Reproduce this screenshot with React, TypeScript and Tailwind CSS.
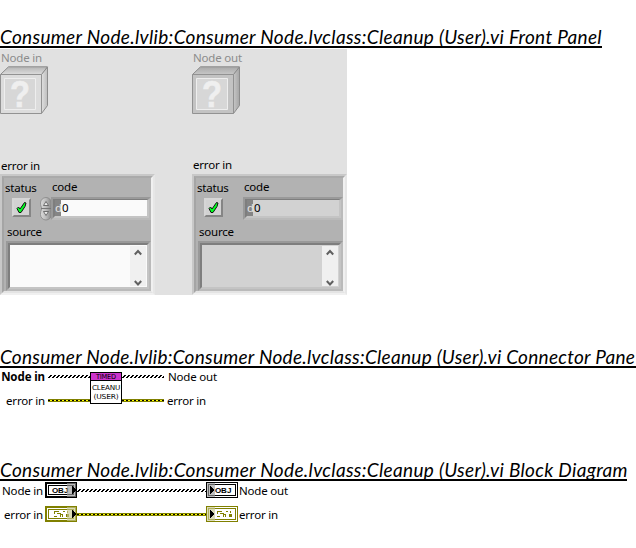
import React from "react";

const ui = "font-['Noto_Sans','Open_Sans',sans-serif] text-[11.5px] tracking-[-0.2px] leading-[16px] whitespace-nowrap";

function Heading({ children, className }: { children: string; className: string }) {
  return (
    <h2 className={`h-[22px] shrink-0 border-b-2 border-black font-['Lato',sans-serif] text-[19px] italic leading-[22px] whitespace-nowrap text-black ${className}`}>
      <span>{children}</span>
    </h2>
  );
}

function Cube({ out = false }: { out?: boolean }) {
  return (
    <svg width="49" height="49" className="block" viewBox="0 0 49 49">
      <defs>
        <linearGradient id={out ? "topOut" : "topIn"} x1="0" y1="0" x2="0" y2="1">
          <stop offset="0" stopColor={out ? "#a9a9a9" : "#b5b5b5"} />
          <stop offset="1" stopColor={out ? "#c8c8c8" : "#dedede"} />
        </linearGradient>
        <linearGradient id={out ? "sideOut" : "sideIn"} x1="0" y1="0" x2="1" y2="0">
          <stop offset="0" stopColor={out ? "#c6c6c6" : "#e0e0e0"} />
          <stop offset="1" stopColor={out ? "#a5a5a5" : "#bdbdbd"} />
        </linearGradient>
      </defs>
      <path d="M.5 8.5 8.500 .8h39l-6 8z" fill={`url(#${out ? "topOut" : "topIn"})`} stroke="#8c8c8c" />
      <path d="M41.500 8.5 47.500 1v38.500L41.500 47.5z" fill={`url(#${out ? "sideOut" : "sideIn"})`} stroke="#8c8c8c" />
      <path d="M.5 8.5h41v39H.5z" fill={out ? "#c3c3c3" : "#dcdcdc"} stroke="#929292" />
      <path d="M4.5 12.5h31v31h-31z" fill="#d7d7d7" stroke="#eee" />
      <text x="20" y="41" textAnchor="middle" fill="#efefef" stroke="#efefef" strokeWidth=".6" fontFamily="Liberation Sans, sans-serif" fontWeight="700" fontSize="36" textLength="20" lengthAdjust="spacingAndGlyphs">?</text>
    </svg>
  );
}

function Check() {
  return (
    <div className="flex h-[19px] w-[19px] items-center justify-center border-2 border-t-[#d6d6d6] border-r-[#858585] border-b-[#858585] border-l-[#d6d6d6] bg-[#d2d2d2]">
      <svg width="11" height="13" viewBox="0 0 11 13">
        <path d="M1 7.5 2.5 6 4 8 8.5 1.5 10 2 9 5.5 5 11.5H3z" fill="#00ff20" stroke="#111" />
      </svg>
    </div>
  );
}

function Spinner() {
  return (
    <svg width="12" height="24" viewBox="0 0 12 24" className="block">
      <defs>
        <linearGradient id="knob"><stop stopColor="#ddd" /><stop offset=".5" stopColor="#bbb" /><stop offset="1" stopColor="#858585" /></linearGradient>
      </defs>
      <path d="M6 .5C9 .5 11.500 3 11.500 6c0 2-.5 4-1.500 5.500 1 1.500 1.500 4 1.500 6 0 3-2.500 5.500-5.500 5.500S.5 20.500.5 17.500c0-2 .5-4.500 1.500-6C1 10 .5 8 .5 6 .5 3 3 .5 6 .5z" fill="url(#knob)" stroke="#858585" strokeWidth=".8" />
      <path d="M1 11.500h10" stroke="#777" />
      <path d="M6 4.500 8.500 8.500h-5zM3.500 14.500h5L6 18.500z" fill="#eee" stroke="#555" strokeWidth=".8" />
    </svg>
  );
}

const outerBevel = "border-2 border-t-[#999] border-r-[#bababa] border-b-[#bababa] border-l-[#999]";
const innerBevel = "border-2 border-t-[#7e7e7e] border-r-[#c4c4c4] border-b-[#c4c4c4] border-l-[#7e7e7e]";

function Cluster({ out = false }: { out?: boolean }) {
  const fill = out ? "bg-[#d2d2d2]" : "bg-[#fafafa]";
  return (
    <div className="h-[121px] w-[155px] border-2 border-t-[#c8c8c8] border-r-[#e6e6e6] border-b-[#f0f0f0] border-l-[#c8c8c8]">
      <div className="h-full border-2 border-t-[#aaa] border-r-[#f0f0f0] border-b-[#e4e4e4] border-l-[#a5a5a5] bg-[#b2b2b2] pl-[2px]">
        <div className={`flex h-[19px] pt-px text-black ${ui}`}>
          <span className="w-[47px] pt-px pl-px -ml-[2px] mr-[1px]">status</span>
          <span>code</span>
        </div>
        <div className="flex h-[25px]">
          <div className="w-[34px] pt-px pl-[6px]"><Check /></div>
          <div className="w-[11px]">{!out && <Spinner />}</div>
          <div className={`h-[23px] w-[100px] ${outerBevel}`}>
            <div className={`flex h-full ${innerBevel} border-t ${fill}`}>
              <span className="w-[6px] bg-[#858585]">
                <span className={`block text-[#e6e6e6] ${ui}`}>d</span>
              </span>
              <span className={`pl-px text-black ${ui}`}>0</span>
            </div>
          </div>
        </div>
        <div className={`h-[19px] pt-[2px] pl-px text-black ${ui}`}>source</div>
        <div className={`h-[50px] w-[145px] ${outerBevel}`}>
          <div className={`flex h-full justify-end pr-px ${innerBevel} ${fill}`}>
            <div className="my-px flex w-[16px] flex-col items-center justify-between bg-[#f0f0f0] pt-[3px]">
              <svg width="8" height="7" viewBox="0 0 8 7"><path d="M.8 5.500 4 2 7.200 5.500" fill="none" stroke="#606060" strokeWidth="2" /></svg>
              <svg width="8" height="7" viewBox="0 0 8 7"><path d="M.8 2 4 5.500 7.200 2" fill="none" stroke="#606060" strokeWidth="2" /></svg>
            </div>
          </div>
        </div>
      </div>
    </div>
  );
}

function Wire({ width, error = false, id }: { width: number; error?: boolean; id: string }) {
  return (
    <svg width={width} height="3" className="block shrink-0" shapeRendering="crispEdges">
      <defs>
        <pattern id={id} width="4" height="3" patternUnits="userSpaceOnUse">
          {error ? (
            <>
              <path d="M0 0h4v3H0z" fill="#808000" />
              <path d="M0 1h2v1H0z" fill="#000" />
              <path d="M2 1h2v1H2z" fill="#ff0" />
            </>
          ) : (
            <path d="M2 0h2v1H2zM1 1h2v1H1zM0 2h2v1H0z" fill="#000" />
          )}
        </pattern>
      </defs>
      <path d={`M0 0h${width}v3H0z`} fill={`url(#${id})`} />
    </svg>
  );
}

function Terminal({ error = false, out = false }: { error?: boolean; out?: boolean }) {
  const c = error ? "#808000" : "#000";
  return (
    <svg width="32" height="16" className="block shrink-0" viewBox="0 0 32 16" shapeRendering="crispEdges">
      <path d="M0 0h32v16H0z" fill={c} />
      {out ? <path d="M1 1h30v14H1z" fill="#fff" /> : <path d="M2 2h28v12H2z" fill="#fff" />}
      {out ? <path d="M2 2h28v12H2z" fill={c} /> : <path d="M3 3h26v10H3z" fill={c} />}
      <path d={out ? "M3 3h26v10H3z" : "M4 4h24v8H4z"} fill="#fff" />
      {error ? (
        <path transform={out ? "translate(2 0)" : ""} d="M9 5h5v1H9zM9 6h1v2H9zM12 7h4v1h-4zM18 5h2v1h-2zM22 5h1v2h-1zM9 10h3v1H9zM15 8h3v1h-3zM15 9h1v2h-1zM17 9h1v2h-1zM21 8h3v3h-3z" fill={c} />
      ) : (
        <text x={out ? "9 15 21" : "7 13 19"} y="11" fontFamily="Liberation Sans, sans-serif" fontWeight="700" fontSize="8">OBJ</text>
      )}
      <path d={out ? "M1 1h8v14H1z" : "M22 1h9v14h-9z"} fill={error ? "#c8c890" : "#999"} fillOpacity=".65" />
      <path d={out ? "M4 4h1v1h1v1h1v1h1v2H7v1H6v1H5v1H4z" : "M27 4h1v1h1v1h1v1h1v2h-1v1h-1v1h-1v1h-1z"} fill="#000" />
    </svg>
  );
}

function MethodIcon() {
  return (
    <svg width="32" height="32" className="block shrink-0" viewBox="0 0 32 32">
      <path d="M0 0h32v32H0z" fill="#000" />
      <path d="M1 1h30v7H1z" fill="#c3c" />
      <path d="M1 9h30v22H1z" fill="#fff" />
      <g fontFamily="DejaVu Sans, sans-serif" fontSize="6.8" fill="#000">
        <text x="6" y="7.200" textLength="20" lengthAdjust="spacingAndGlyphs">TIMED</text>
        <text x="2" y="18" textLength="28" lengthAdjust="spacingAndGlyphs">CLEANU</text>
        <text x="3.500" y="27" textLength="25" lengthAdjust="spacingAndGlyphs">(USER)</text>
      </g>
    </svg>
  );
}

export default function App() {
  return (
    <main className="flex h-[548px] w-[636px] flex-col overflow-hidden bg-white pt-[26px]">
      <Heading className="w-[602px] tracking-[0.32px]">Consumer Node.lvlib:Consumer Node.lvclass:Cleanup (User).vi Front Panel</Heading>
      <section className="mt-px flex h-[246px] w-[347px] shrink-0 justify-between bg-[#e1e1e1]">
        <div className="flex w-[155px] flex-col">
          <div className={`h-[17px] pt-px pl-px text-[#8c8c8c] ${ui}`}>Node in</div>
          <Cube />
          <div className={`mt-[43px] h-[16px] pl-px text-black ${ui}`}>error in</div>
          <Cluster />
        </div>
        <div className="flex w-[155px] flex-col">
          <div className={`h-[17px] pt-px pl-px text-[#8c8c8c] ${ui}`}>Node out</div>
          <Cube out />
          <div className={`mt-[42px] h-[17px] pl-px text-black ${ui}`}>error in</div>
          <Cluster out />
        </div>
      </section>

      <Heading className="mt-[51px] w-[636px] tracking-[0.275px]">Consumer Node.lvlib:Consumer Node.lvclass:Cleanup (User).vi Connector Pane</Heading>
      <section className={`mt-[4px] flex h-[36px] shrink-0 text-black ${ui}`}>
        <div className="flex w-[48px] flex-col items-end gap-[8px] pr-[3px] -mt-[3px]">
          <b className="tracking-[-0.1px]">Node in</b>
          <span>error in</span>
        </div>
        <div className="flex flex-col gap-[21px] pt-[3px]"><Wire width={42} id="wireA" /><Wire width={42} error id="wireB" /></div>
        <MethodIcon />
        <div className="flex flex-col gap-[21px] pt-[3px]"><Wire width={42} id="wireC" /><Wire width={42} error id="wireD" /></div>
        <div className="flex flex-col gap-[8px] pl-[4px] -mt-[3px]">
          <span>Node out</span>
          <span className="-ml-px">error in</span>
        </div>
      </section>

      <Heading className="mt-[51px] w-[627px] tracking-[0.32px]">Consumer Node.lvlib:Consumer Node.lvclass:Cleanup (User).vi Block Diagram</Heading>
      <section className={`mt-px flex shrink-0 flex-col gap-[8px] text-black ${ui}`}>
        <div className="flex h-[16px] items-center">
          <span className="w-[45px] pt-px pr-[2px] text-right">Node in</span>
          <Terminal />
          <Wire width={129} id="wireE" />
          <Terminal out />
          <span className="pt-px pl-px">Node out</span>
        </div>
        <div className="flex h-[16px] items-center">
          <span className="w-[45px] pt-px pr-[2px] text-right">error in</span>
          <Terminal error />
          <Wire width={129} error id="wireF" />
          <Terminal error out />
          <span className="pt-px pl-px">error in</span>
        </div>
      </section>
    </main>
  );
}
